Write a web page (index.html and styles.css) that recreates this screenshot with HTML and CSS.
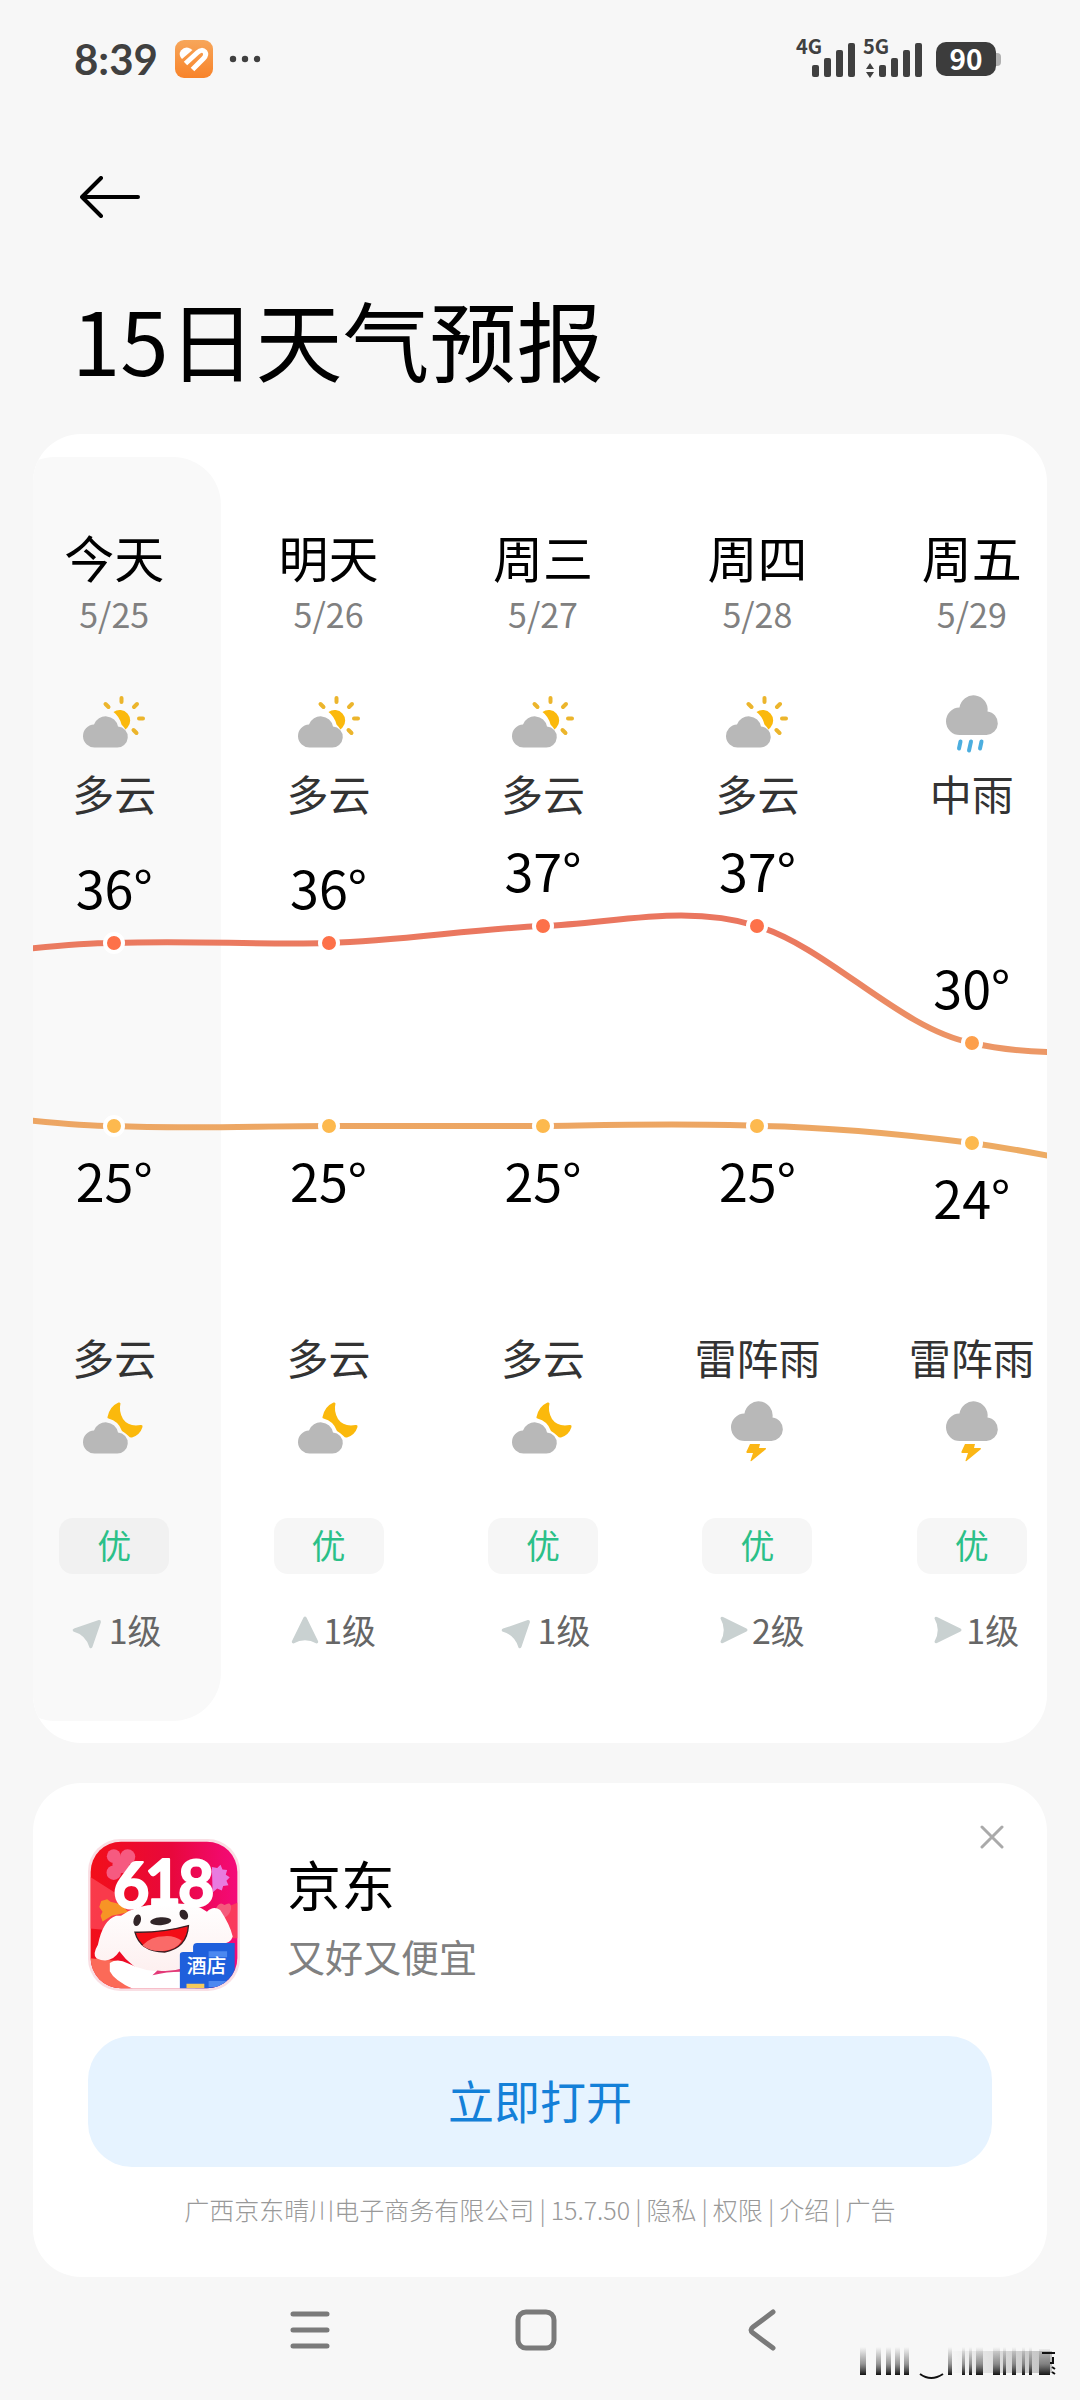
FILE: index.html
```html
<!DOCTYPE html>
<html lang="zh-CN">
<head>
<meta charset="utf-8">
<meta name="viewport" content="width=device-width, initial-scale=1">
<title>15日天气预报</title>
<link rel="stylesheet" href="styles.css">
</head>
<body>
<svg class="sprite" aria-hidden="true">
  <symbol id="cloud-sun" viewBox="0 0 64 64">
    <path fill="#b8b8b8" d="M13 54.500a11.500 11.500 0 0 1-1-23A12.500 12.500 0 0 1 36 33.500a10.500 10.500 0 0 1-1.500 21z"/>
    <path fill="#fbb90c" d="M31.500 19A10.500 10.500 0 0 1 45.500 34.500Q44.500 35.500 43.500 36.500Q41.500 33.500 39.500 31.500Q37.500 23.500 31.500 19z"/>
    <path fill="none" stroke="#ecb52c" stroke-width="4" stroke-linecap="round" d="M39.500 5v4M23.500 11l3 3M55 11l-3 3M57 25.500h4M51.500 37l3 3"/>
  </symbol>
  <symbol id="cloud-moon" viewBox="0 0 64 64">
    <path fill="#b8b8b8" d="M13 54.500a11.500 11.500 0 0 1-1-23A12.500 12.500 0 0 1 36 33.500a10.500 10.500 0 0 1-1.500 21z"/>
    <path fill="#fbb90c" d="M25.500 18Q27.500 7.500 36.500 3.500Q38 3 38.500 4.500Q36.500 12 41 20Q46.500 28 58.500 26Q61 25.500 60.500 28Q58 36 50 38.500Q48 39 46.500 37Q43.500 34 40 32Q36.500 22 26.500 19.500Q25 19 25.500 18z"/>
  </symbol>
  <symbol id="rain" viewBox="-2 0 64 64">
    <path fill="#b8b8b8" d="M18 42a13.500 13.500 0 0 1-.5-27.500A14 14 0 0 1 45.500 18.500A11.800 11.800 0 0 1 44.500 42z"/>
    <path fill="none" stroke="#4caedf" stroke-width="4" stroke-linecap="round" d="M18.500 48.500l-1.500 7M29 48.500l-2 9M39.500 48.500l-1.500 7"/>
  </symbol>
  <symbol id="thunder" viewBox="-2 0 64 64">
    <path fill="#b8b8b8" d="M18 42a13.500 13.500 0 0 1-.5-27.500A14 14 0 0 1 45.500 18.500A11.800 11.800 0 0 1 44.500 42z"/>
    <path fill="#fbb615" d="M23 45h10l-1 4h6.500q1 .5 0 1.500L24.500 62q-1 .5-1-.5L26 54h-6q-1-.5-.500-1.500z"/>
  </symbol>
  <symbol id="wind" viewBox="0 0 28 28">
    <path fill="#c9d1d1" d="M12.500 1.500q1.500-2 3 0L27 25q.8 2.500-1.500 2.500Q14 21 2.500 27.500Q.2 27.500 1 25z"/>
  </symbol>
</svg>

<div class="status">
  <span class="clock">8:39</span>
  <svg class="app-badge" viewBox="0 0 38 38" aria-hidden="true">
    <defs><linearGradient id="badge-fill" x1="0" y1="0" x2="0" y2="1"><stop offset="0" stop-color="#f7a65a"/><stop offset="1" stop-color="#f8832a"/></linearGradient></defs>
    <rect width="38" height="38" rx="9" fill="url(#badge-fill)"/>
    <path fill="none" stroke="#fff" stroke-width="5" d="M10.500 23.500L22.500 12.500Q27 8.500 30 12Q32 15 28.500 18.500L17.500 29.500"/>
    <path fill="#fff" d="M7 19Q3 14.500 6 10.500Q10 6 15 8.500L17.500 10z"/>
  </svg>
  <svg class="dots" viewBox="0 0 32 8" aria-hidden="true"><g fill="#404040"><circle cx="4" cy="4" r="3.200"/><circle cx="16" cy="4" r="3.200"/><circle cx="28" cy="4" r="3.200"/></g></svg>
  <svg class="signals" viewBox="-4 -8 132 60" aria-label="4G 5G">
    <g fill="#404040">
      <text x="0" y="17">4G</text>
      <rect x="16" y="28" width="7" height="12" rx="2"/><rect x="28" y="21" width="7" height="19" rx="2"/><rect x="40" y="13" width="7" height="27" rx="2"/><rect x="52" y="6" width="7" height="34" rx="2"/>
      <text x="67" y="17">5G</text>
      <path d="M70 32l4-6 4 6zM70 35h8l-4 6z"/>
      <rect x="83" y="28" width="7" height="12" rx="2"/><rect x="95" y="21" width="7" height="19" rx="2"/><rect x="107" y="13" width="7" height="27" rx="2"/><rect x="119" y="6" width="7" height="34" rx="2"/>
    </g>
  </svg>
  <span class="battery">90</span>
</div>

<header class="top">
  <button class="back" type="button" aria-label="返回">
    <svg viewBox="0 0 60 42" aria-hidden="true"><path fill="none" stroke="#000" stroke-width="4" stroke-linecap="round" stroke-linejoin="round" d="M21 2L2 21L21 40M3 21H58"/></svg>
  </button>
  <h1>15日天气预报</h1>
</header>

<main>
  <section class="card forecast">
    <div class="track">
      <article class="day today">
        <h2>今天</h2><time>5/25</time>
        <svg class="sky"><use href="#cloud-sun"/></svg><p class="cond">多云</p>
        <div class="temps"><span style="margin-top:38px">36°</span><span style="margin-top:331px">25°</span></div>
        <p class="cond">多云</p><svg class="sky night"><use href="#cloud-moon"/></svg>
        <span class="air">优</span>
        <p class="level"><svg class="arrow ne"><use href="#wind"/></svg>1级</p>
      </article>
      <article class="day">
        <h2>明天</h2><time>5/26</time>
        <svg class="sky"><use href="#cloud-sun"/></svg><p class="cond">多云</p>
        <div class="temps"><span style="margin-top:38px">36°</span><span style="margin-top:331px">25°</span></div>
        <p class="cond">多云</p><svg class="sky night"><use href="#cloud-moon"/></svg>
        <span class="air">优</span>
        <p class="level"><svg class="arrow"><use href="#wind"/></svg>1级</p>
      </article>
      <article class="day">
        <h2>周三</h2><time>5/27</time>
        <svg class="sky"><use href="#cloud-sun"/></svg><p class="cond">多云</p>
        <div class="temps"><span style="margin-top:21px">37°</span><span style="margin-top:331px">25°</span></div>
        <p class="cond">多云</p><svg class="sky night"><use href="#cloud-moon"/></svg>
        <span class="air">优</span>
        <p class="level"><svg class="arrow ne"><use href="#wind"/></svg>1级</p>
      </article>
      <article class="day">
        <h2>周四</h2><time>5/28</time>
        <svg class="sky"><use href="#cloud-sun"/></svg><p class="cond">多云</p>
        <div class="temps"><span style="margin-top:21px">37°</span><span style="margin-top:331px">25°</span></div>
        <p class="cond">雷阵雨</p><svg class="sky night"><use href="#thunder"/></svg>
        <span class="air">优</span>
        <p class="level"><svg class="arrow e"><use href="#wind"/></svg>2级</p>
      </article>
      <article class="day">
        <h2>周五</h2><time>5/29</time>
        <svg class="sky"><use href="#rain"/></svg><p class="cond">中雨</p>
        <div class="temps"><span style="margin-top:138px">30°</span><span style="margin-top:348px">24°</span></div>
        <p class="cond">雷阵雨</p><svg class="sky night"><use href="#thunder"/></svg>
        <span class="air">优</span>
        <p class="level"><svg class="arrow e"><use href="#wind"/></svg>1级</p>
      </article>
      <svg class="chart" viewBox="0 0 1072 512" preserveAspectRatio="none" aria-hidden="true">
        <defs><linearGradient id="heat" gradientUnits="userSpaceOnUse" x1="0" y1="110" x2="0" y2="330"><stop offset="0" stop-color="#ea765f"/><stop offset=".55" stop-color="#ec9766"/><stop offset="1" stop-color="#edab63"/></linearGradient></defs>
        <g fill="none" stroke="url(#heat)" stroke-width="6">
          <path d="M-10 134C30 130 66 125 107 125C180 122 250 127 322 125C393 123 465 111 536 108C608 105 680 86 750 108C822 130 893 211 965 225C995 232 1025 235 1072 234"/>
          <path d="M-10 299C30 303 66 308 107 308C180 311 250 308 322 308C393 308 465 308 536 308C608 307 680 305 750 308C822 309 893 316 965 325C1000 330 1030 335 1072 344"/>
        </g>
        <g stroke="#fff" stroke-width="4">
          <g fill="#fd7149"><circle cx="107" cy="125" r="9"/><circle cx="322" cy="125" r="9"/><circle cx="536" cy="108" r="9"/><circle cx="750" cy="108" r="9"/></g>
          <circle cx="965" cy="225" r="9" fill="#fd9f4b"/>
          <g fill="#fdb94e"><circle cx="107" cy="308" r="9"/><circle cx="322" cy="308" r="9"/><circle cx="536" cy="308" r="9"/><circle cx="750" cy="308" r="9"/><circle cx="965" cy="325" r="9"/></g>
        </g>
      </svg>
    </div>
  </section>

  <section class="card ad">
    <button class="close" type="button" aria-label="关闭"><svg viewBox="0 0 24 24" aria-hidden="true"><path fill="none" stroke="#aaa" stroke-width="3" stroke-linecap="round" d="M2 2l20 20M22 2L2 22"/></svg></button>
    <div class="app">
      <svg class="logo" viewBox="0 0 460 460" role="img" aria-label="京东">
        <defs>
          <clipPath id="tile"><rect x="8" y="8" width="444" height="444" rx="92"/></clipPath>
          <linearGradient id="red" x1="0" y1="0" x2="1" y2="0"><stop offset="0" stop-color="#f20f18"/><stop offset=".55" stop-color="#e8083c"/><stop offset="1" stop-color="#f50a7c"/></linearGradient>
          <linearGradient id="fur" x1="0" y1="0" x2="0" y2="1"><stop offset="0" stop-color="#fff"/><stop offset="1" stop-color="#fdeeee"/></linearGradient>
        </defs>
        <rect width="460" height="460" rx="98" fill="#f9dfe4"/>
        <g clip-path="url(#tile)">
          <rect width="460" height="460" fill="url(#red)"/>
          <path fill="#fb4656" d="M0 110L140 200L100 280L0 270zM360 230L460 190V300H380z" opacity=".8"/>
          <path fill="#fb6a58" d="M0 360L100 370L130 460H0z"/>
          <g fill="#f65a80"><circle cx="78" cy="52" r="21"/><circle cx="120" cy="54" r="23"/><circle cx="78" cy="102" r="22"/><circle cx="100" cy="78" r="26"/></g>
          <path fill="#e87be0" d="M375 85l16 3 10-10 6 14 14 2-4 14 12 8-10 10 6 14-16 2-4 14-14-6-14 12z"/>
          <path fill="#f79425" d="M40 188l18-6 10 8 34 8 20 24-50 10-28 18-6-18 6-12-10-14z"/>
          <path fill="#f55a7c" d="M385 215q12-30 28-15q22-14 20 12q-4 20-24 28z"/>
          <path fill="url(#fur)" d="M100 232Q150 196 220 198Q320 186 360 220Q380 200 400 215Q430 260 438 295Q430 325 375 315Q350 390 290 405L200 420Q130 390 95 340Q70 380 26 362Q12 350 30 320Q45 245 85 232z"/>
          <path fill="#fff" d="M66 375Q90 360 120 376Q190 412 290 400L330 460H150Q80 430 66 400z"/>
          <path fill="#e33a78" d="M195 412l15-14q40 6 82-8v12q-45-2-97 10z"/>
          <g class="promo"><text x="76" y="208">6</text><text x="172" y="200">1</text><text x="272" y="204">8</text></g>
          <g fill="#322528"><ellipse cx="149" cy="246" rx="11" ry="18" transform="rotate(15 149 246)"/><ellipse cx="290" cy="229" rx="12" ry="16" transform="rotate(-30 290 229)"/><ellipse cx="220" cy="249" rx="32" ry="12" transform="rotate(-4 220 249)"/></g>
          <path fill="#f30d16" stroke="#3b2024" stroke-width="4" d="M142 282Q225 284 304 262Q300 330 232 342Q158 342 142 282z"/>
          <path fill="#fa6a68" d="M164 322Q190 294 232 294Q262 292 284 308Q268 334 232 338Q190 342 164 322z"/>
          <path fill="#1f5fdc" d="M318 325Q320 315 330 315H444V460H278V350Q278 342 288 342H318z"/>
          <path fill="#4c88f0" d="M365 340h56v18h-56zM365 430h56v18h-56z"/>
          <path fill="#f4c95b" d="M298 438h54v14h-54z"/>
          <text class="tag" x="299" y="407">酒店</text>
        </g>
      </svg>
      <div class="about"><h2>京东</h2><p>又好又便宜</p></div>
    </div>
    <button class="open" type="button">立即打开</button>
    <p class="legal"><span>广西京东晴川电子商务有限公司</span><i>|</i><span>15.7.50</span><i>|</i><a href="#privacy">隐私</a><i>|</i><a href="#permissions">权限</a><i>|</i><a href="#intro">介绍</a><i>|</i><span>广告</span></p>
  </section>
</main>

<nav class="system">
  <button type="button" aria-label="最近任务"><svg viewBox="0 0 44 44" aria-hidden="true"><path fill="none" stroke="#7a7a7a" stroke-width="5" stroke-linecap="round" d="M5 6H39M5 22H39M5 38H39"/></svg></button>
  <button type="button" aria-label="主屏幕"><svg viewBox="0 0 44 44" aria-hidden="true"><rect x="4" y="4" width="36" height="36" rx="8" fill="none" stroke="#7a7a7a" stroke-width="5"/></svg></button>
  <button type="button" aria-label="返回"><svg viewBox="0 0 44 44" aria-hidden="true"><path fill="none" stroke="#7a7a7a" stroke-width="5" stroke-linecap="round" d="M33 4L13 19Q9 22 13 25L33 40"/></svg></button>
  <svg class="smudge" viewBox="0 0 200 36" aria-hidden="true">
    <defs>
      <linearGradient id="fade" x1="0" y1="0" x2="0" y2="1"><stop offset="0" stop-color="#555" stop-opacity="0"/><stop offset=".6" stop-color="#555" stop-opacity=".6"/><stop offset="1" stop-color="#111"/></linearGradient>
      <linearGradient id="haze" x1="0" y1="0" x2="1" y2="0"><stop offset="0" stop-color="#888" stop-opacity="0"/><stop offset="1" stop-color="#888" stop-opacity=".5"/></linearGradient>
    </defs>
    <path fill="url(#haze)" d="M90 4h104v22H90z"/>
    <path fill="url(#fade)" d="M2 0h6v28H2zM18 0h5v28h-5zM28 0h5v28h-5zM37 0h5v28h-5zM46 0h5v28h-5zM90 0h4v28h-4zM104 0h3v28h-3zM111 0h3v28h-3zM118 0h7v28h-7zM135 0h7v28h-7zM145 0h3v28h-3zM154 0h4v28h-4zM164 0h3v28h-3zM171 0h3v28h-3zM181 2h11v26h-11z"/>
    <path fill="none" stroke="#111" stroke-width="2" d="M62 27Q73 35 85 27M184 6h13M195 10v6h-3M194 20l3 2M194 25l3 2"/>
  </svg>
</nav>
</body>
</html>
```
FILE: styles.css
```css
* { box-sizing: border-box; }

body {
  margin: 0;
  background: #f7f7f7;
  color: #000;
  font-family: "Noto Sans CJK SC", "Noto Sans", sans-serif;
}

h1, h2, p { margin: 0; font-weight: 400; }
svg { display: block; }
button { padding: 0; border: 0; background: none; font: inherit; color: inherit; }
a { color: inherit; text-decoration: none; }
.sprite { position: absolute; width: 0; height: 0; }

/* Status bar */
.status {
  display: flex;
  align-items: center;
  height: 118px;
  padding: 0 84px 0 74px;
  color: #404040;
}
.clock { font-family: Lato, sans-serif; font-size: 42px; font-weight: 700; line-height: 46px; }
.app-badge { width: 38px; height: 38px; margin-left: 17px; }
.dots { width: 32px; height: 8px; margin-left: 16px; }
.signals { width: 132px; height: 60px; margin-left: auto; }
.signals text { font: 700 20px "Noto Sans CJK SC", sans-serif; }
.battery {
  position: relative;
  width: 60px;
  height: 34px;
  margin-left: 12px;
  border-radius: 10px;
  background: #3c3c3c;
  color: #fff;
  font-size: 28px;
  font-weight: 700;
  line-height: 32px;
  text-align: center;
}
.battery::after {
  content: "";
  position: absolute;
  top: 11px;
  left: 60px;
  width: 5px;
  height: 13px;
  border-radius: 0 4px 4px 0;
  background: #b0b0b0;
}

/* Page heading */
.top { padding: 58px 72px 46px; }
.back { display: block; margin-left: 8px; }
.back svg { width: 60px; height: 42px; }
h1 { margin-top: 70px; font-size: 87px; line-height: 100px; }

main { display: grid; gap: 40px; padding: 0 33px; }
.card { border-radius: 48px; background: #fff; }

/* Forecast: the strip is scrolled a little past its first column */
.forecast { overflow: hidden; padding: 23px 0 22px; }
.track {
  position: relative;
  display: grid;
  grid-template-columns: repeat(5, 1fr);
  margin: 0 -32px 0 -26px;
}
.day {
  display: flex;
  flex-direction: column;
  align-items: center;
  padding: 67px 0 66px;
}
.today { border-radius: 48px; background: #f9f9f9; }
.day h2 { font-size: 50px; line-height: 64px; }
.day time { margin-top: 4px; color: #808080; font-size: 34px; line-height: 44px; }
.sky { width: 64px; height: 64px; margin-top: 57px; }
.sky.night { margin-top: 16px; }
.cond { color: #333; font-size: 42px; line-height: 52px; white-space: nowrap; }
.sky + .cond { margin-top: 10px; }
.temps { display: grid; justify-items: center; height: 512px; font-size: 52px; line-height: 60px; }
.temps span { grid-area: 1 / 1; height: 60px; }
.air {
  width: 110px;
  margin-top: 55px;
  padding-bottom: 2px;
  border-radius: 14px;
  background: #f6f6f6;
  color: #2bc088;
  font-size: 34px;
  line-height: 54px;
  text-align: center;
}
.today .air { background: #f1f1f1; }
.level {
  display: flex;
  align-items: center;
  gap: 4px;
  margin-top: 31px;
  padding-left: 10px;
  color: #666;
  font-size: 34px;
  line-height: 50px;
}
.arrow { width: 28px; height: 28px; }
.arrow.ne { transform: rotate(45deg); }
.arrow.e { transform: rotate(90deg); }
.chart { position: absolute; top: 361px; left: 0; width: 100%; height: 512px; }

/* Promotion */
.ad { position: relative; padding: 56px 55px 50px; }
.close { position: absolute; top: 42px; right: 43px; }
.close svg { width: 24px; height: 24px; }
.app { display: flex; align-items: center; gap: 47px; }
.logo { width: 152px; height: 152px; }
.promo text {
  fill: #fff;
  stroke: #fff;
  stroke-width: 6px;
  stroke-linejoin: round;
  font: 700 190px Lato, sans-serif;
}
.tag { fill: #fff; font: 500 60px "Noto Sans CJK SC", sans-serif; }
.about { display: grid; gap: 12px; }
.about h2 { font-size: 54px; line-height: 70px; }
.about p { color: #808080; font-size: 38px; line-height: 50px; }
.open {
  display: block;
  width: 100%;
  margin-top: 45px;
  padding-bottom: 5px;
  border-radius: 44px;
  background: #e6f3ff;
  color: #1480d8;
  font-size: 46px;
  line-height: 126px;
}
.legal {
  display: flex;
  justify-content: center;
  gap: 5px;
  margin-top: 24px;
  color: #999;
  font-size: 25px;
  font-weight: 300;
  line-height: 36px;
  white-space: nowrap;
}
.legal i { font-style: normal; }

/* Navigation bar */
.system {
  position: relative;
  display: flex;
  justify-content: center;
  gap: 182px;
  padding: 31px 8px 49px 0;
}
.system button svg { width: 44px; height: 44px; }
.smudge { position: absolute; right: 22px; bottom: 18px; width: 200px; height: 36px; }
```
